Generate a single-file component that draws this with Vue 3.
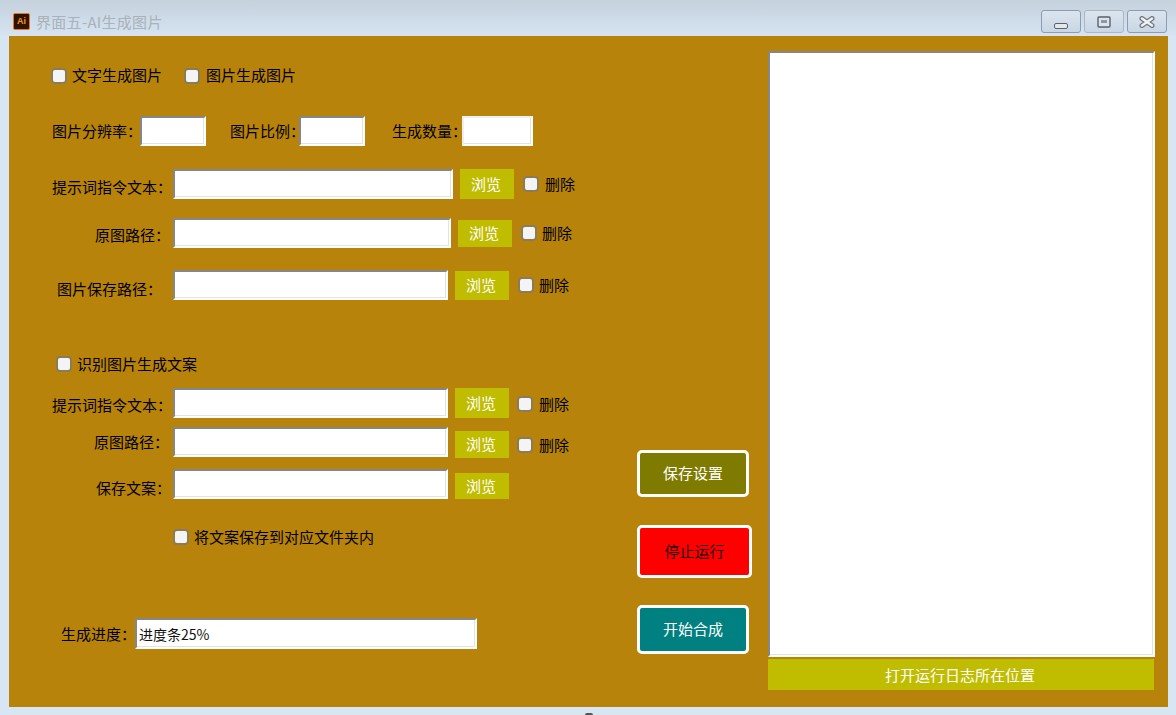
<script setup>
const topRows = [
  { label: '提示词指令文本：', pad: 43, width: 280, cls: 'r3', shift: 4, btnH: 30, btnTop: 0, del: true, delTop: 0, delGap: 6, delLeft: 9 },
  { label: '原图路径：', pad: 86, width: 278, cls: 'r4', shift: 2, btnH: 27, btnTop: 0, del: true, delTop: 0, delGap: 5, delLeft: 9 },
  { label: '图片保存路径：', pad: 48, width: 275, cls: 'r5', shift: 6, btnH: 29, btnTop: 1, del: true, delTop: 0, delGap: 5, delLeft: 9 }
]
const lowRows = [
  { label: '提示词指令文本：', pad: 43, width: 275, cls: 'r7', shift: 2, btnH: 30, btnTop: 0, del: true, delTop: 1, delGap: 6, delLeft: 8 },
  { label: '原图路径：', pad: 85, width: 275, cls: 'r8', shift: -2, btnH: 27, btnTop: 4, del: true, delTop: 5, delGap: 6, delLeft: 8 },
  { label: '保存文案：', pad: 87, width: 275, cls: 'r9', shift: 6, btnH: 26, btnTop: 4, del: false, delTop: 0, delGap: 5, delLeft: 8 }
]
</script>

<template>
  <div class="window">
    <header class="titlebar">
      <div class="app-icon"><span>Ai</span></div>
      <div class="title">界面五-AI生成图片</div>
      <div class="controls">
        <button class="ctl" aria-label="最小化"><svg width="14" height="6" viewBox="0 0 14 6"><rect x="0.5" y="0.5" width="13" height="5" rx="1.5" fill="#e4e8ee" stroke="#5b626c"/></svg></button>
        <button class="ctl ctl-soft" aria-label="最大化"><svg width="14" height="12" viewBox="0 0 14 12"><rect x="1" y="1" width="12" height="10" rx="1" fill="#dbe4ee" stroke="#5a616b" stroke-width="1.4"/><rect x="4" y="4" width="6" height="3" fill="#8e98a4"/></svg></button>
        <button class="ctl" aria-label="关闭"><svg width="16" height="12" viewBox="0 0 16 12"><path d="M3 2.5 L13 9.5 M13 2.5 L3 9.5" stroke="#6f7680" stroke-width="5" stroke-linecap="round"/><path d="M3 2.5 L13 9.5 M13 2.5 L3 9.5" stroke="#f0f2f5" stroke-width="2.6" stroke-linecap="round"/></svg></button>
      </div>
    </header>

    <main class="client">
      <section class="form">
        <div class="row r1">
          <label class="check first"><input type="checkbox" /><span>文字生成图片</span></label>
          <label class="check second"><input type="checkbox" /><span>图片生成图片</span></label>
        </div>

        <div class="row r2">
          <span class="lbl-a">图片分辨率：</span>
          <input class="field small" type="text" />
          <span class="lbl-b">图片比例：</span>
          <input class="field small" type="text" />
          <span class="lbl-c">生成数量：</span>
          <input class="field small last" type="text" />
        </div>

        <div v-for="r in topRows" :key="r.cls" class="row" :class="r.cls">
          <span class="label" :style="{ paddingLeft: r.pad + 'px', marginTop: r.shift + 'px' }">{{ r.label }}</span>
          <input class="field" type="text" :style="{ width: r.width + 'px' }" />
          <button class="browse" :style="{ height: r.btnH + 'px', marginTop: r.btnTop + 'px' }">浏览</button>
          <label class="check del" :style="{ marginTop: r.delTop + 'px', gap: r.delGap + 'px', marginLeft: r.delLeft + 'px' }"><input type="checkbox" /><span>删除</span></label>
        </div>

        <div class="row r6">
          <label class="check sub"><input type="checkbox" /><span>识别图片生成文案</span></label>
        </div>

        <div v-for="r in lowRows" :key="r.cls" class="row" :class="r.cls">
          <span class="label" :style="{ paddingLeft: r.pad + 'px', marginTop: r.shift + 'px' }">{{ r.label }}</span>
          <input class="field" type="text" :style="{ width: r.width + 'px' }" />
          <button class="browse" :style="{ height: r.btnH + 'px', marginTop: r.btnTop + 'px' }">浏览</button>
          <label v-if="r.del" class="check del" :style="{ marginTop: r.delTop + 'px', gap: r.delGap + 'px', marginLeft: r.delLeft + 'px' }"><input type="checkbox" /><span>删除</span></label>
        </div>

        <div class="row r10">
          <label class="check folder"><input type="checkbox" /><span>将文案保存到对应文件夹内</span></label>
        </div>

        <div class="row r11">
          <span class="lbl-p">生成进度：</span>
          <input class="field progress" type="text" value="进度条25%" />
        </div>
      </section>

      <section class="actions">
        <button class="act save">保存设置</button>
        <button class="act stop">停止运行</button>
        <button class="act start">开始合成</button>
      </section>

      <section class="side">
        <textarea class="log"></textarea>
        <button class="open-log">打开运行日志所在位置</button>
      </section>
    </main>
    <div class="foot-mark"></div>
  </div>
</template>

<style scoped>
.window {
  position: relative;
  width: 1176px;
  height: 715px;
  box-sizing: border-box;
  padding: 0 8px 8px 9px;
  background: #d8e5f2;
  font-family: "Noto Sans CJK SC", "Liberation Sans", sans-serif;
  font-size: 15px;
  color: #000;
  overflow: hidden;
}
.titlebar {
  display: flex;
  align-items: center;
  height: 36px;
  margin: 0 -8px 0 -9px;
  padding: 7px 0 0 13px;
  box-sizing: border-box;
  background: linear-gradient(#c5d1dd, #d6e3f1);
}
.app-icon {
  width: 17px;
  height: 17px;
  box-sizing: border-box;
  border: 1px solid #e8761c;
  border-radius: 2px;
  background: #2e1400;
  color: #f59a23;
  font: 700 9px/15px "Liberation Sans", sans-serif;
  text-align: center;
}
.title {
  margin-left: 6px;
  color: #a9b1ba;
  font-size: 15px;
  letter-spacing: 0.3px;
}
.controls {
  display: flex;
  gap: 3px;
  margin-left: auto;
  margin-right: 9px;
}
.ctl {
  display: flex;
  align-items: center;
  justify-content: center;
  width: 40px;
  height: 23px;
  padding: 0;
  border: 1px solid #8d9cb0;
  border-radius: 3px;
  background: linear-gradient(#dbe5ef, #c9d6e4);
}
.ctl:first-child svg { margin-top: 8px; }
.ctl-soft { border-color: #a9b6c6; }
.client {
  display: flex;
  height: 671px;
  background: #b8830a;
}
.form {
  width: 628px;
  padding-top: 30px;
  box-sizing: border-box;
}
.row {
  display: flex;
  align-items: center;
  white-space: nowrap;
}
.r1 { height: 20px; }
.r2 { height: 30px; margin-top: 30px; }
.r3 { height: 30px; margin-top: 23px; }
.r4 { height: 30px; margin-top: 19px; }
.r5 { height: 30px; margin-top: 22px; }
.r6 { height: 20px; margin-top: 54px; }
.r7 { height: 30px; margin-top: 14px; }
.r8 { height: 30px; margin-top: 9px; }
.r9 { height: 30px; margin-top: 12px; }
.r10 { height: 20px; margin-top: 28px; }
.r11 { height: 31px; margin-top: 71px; }

.check {
  display: flex;
  align-items: center;
  gap: 5px;
  line-height: 20px;
}
.check input {
  appearance: none;
  width: 16px;
  height: 16px;
  margin: 0;
  box-sizing: border-box;
  border: 2px solid #8a7c58;
  border-radius: 4px;
  background: #f4f4f4;
}
.first { margin-left: 42px; }
.first span, .second span { padding-bottom: 2px; }
.second { margin-left: 22px; gap: 6px; }
.sub { margin-left: 47px; }
.folder { margin-left: 164px; }

.label {
  width: 164px;
  box-sizing: border-box;
}
.lbl-a { margin-left: 43px; width: 88px; margin-top: -1px; }
.lbl-b { margin-left: 24px; width: 69px; margin-top: -1px; }
.lbl-c { margin-left: 27px; width: 70px; margin-top: -1px; }
.lbl-p { margin-left: 52px; width: 74px; margin-top: -1px; }

.field {
  height: 30px;
  margin: 0;
  padding: 0 0 0 2px;
  box-sizing: border-box;
  border-style: solid;
  border-width: 2px;
  border-color: #868686 #fff #fff #868686;
  box-shadow: inset -1px -1px 0 #e3e3e3;
  border-radius: 0;
  outline: none;
  background: #fff;
  font: inherit;
  font-size: 14px;
  color: #111;
}
.small { width: 66px; }
.last { width: 71px; border-top-color: #eee; border-left-color: #eee; }
.progress { width: 342px; height: 31px; }

.browse {
  width: 54px;
  margin-left: 7px;
  padding: 0 2px 2px 0;
  border: 0;
  background: #c0bd00;
  color: #fff;
  font: inherit;
}
.actions {
  display: flex;
  flex-direction: column;
  align-items: flex-start;
  width: 131px;
  padding-top: 414px;
  box-sizing: border-box;
}
.act {
  width: 112px;
  padding: 0 0 2px;
  box-sizing: border-box;
  border: 3px solid #fff;
  border-radius: 5px;
  font: inherit;
  color: #fff;
}
.save { height: 47px; background: #7f7b00; }
.stop { width: 115px; height: 53px; margin-top: 28px; background: #ff0000; color: #200; }
.start { height: 49px; margin-top: 27px; background: #008080; }

.side {
  display: flex;
  flex-direction: column;
  width: 387px;
  padding-top: 15px;
  box-sizing: border-box;
}
.log {
  display: block;
  width: 387px;
  height: 606px;
  margin: 0;
  padding: 0;
  box-sizing: border-box;
  resize: none;
  border-style: solid;
  border-width: 2px;
  border-color: #868686 #fff #fff #868686;
  box-shadow: inset -1px -1px 0 #e3e3e3;
  border-radius: 0;
  outline: none;
  background: #fff;
}
.open-log {
  width: 386px;
  height: 31px;
  margin-top: 2px;
  padding: 0 2px 0 0;
  border: 0;
  background: #c0bd00;
  color: #fff;
  font: inherit;
}
.foot-mark {
  position: absolute;
  left: 585px;
  top: 713px;
  width: 8px;
  height: 2px;
  border-radius: 2px 2px 0 0;
  background: #555;
}
</style>

<style>
html, body { margin: 0; overflow: hidden; }
</style>
